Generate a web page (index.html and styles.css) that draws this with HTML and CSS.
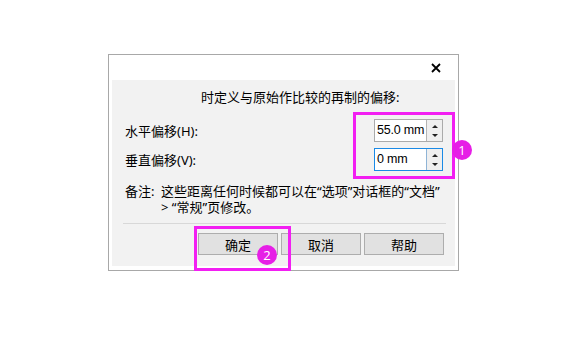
FILE: index.html
```html
<!DOCTYPE html>
<html lang="zh-CN">
  <head>
    <meta charset="UTF-8" />
    <title>偏移</title>
    <link rel="stylesheet" href="styles.css">
  </head>
  <body>
    <div class="dialog">
      <div class="titlebar">
        <svg class="close" width="10" height="10" viewBox="0 0 10 10">
          <path d="M1 1L9 9M9 1L1 9" stroke="#000" stroke-width="1.8" fill="none" />
        </svg>
      </div>
      <div class="panel">
        <div class="heading">时定义与原始作比较的再制的偏移:</div>

        <div class="row">
          <span class="label">水平偏移(H):</span>
          <div class="spin">
            <span class="spin__value">55.0 mm</span>
            <span class="spin__btns">
              <i class="arrow arrow--up"></i>
              <i class="arrow arrow--down"></i>
            </span>
          </div>
        </div>
        <div class="row">
          <span class="label">垂直偏移(V):</span>
          <div class="spin spin--focus">
            <span class="spin__value">0 mm</span>
            <span class="spin__btns">
              <i class="arrow arrow--up"></i>
              <i class="arrow arrow--down"></i>
            </span>
          </div>
        </div>

        <div class="note">
          <span class="note__label">备注:</span>
          <span class="note__text">这些距离任何时候都可以在“选项”对话框的“文档”<br>&gt; “常规”页修改。</span>
        </div>

        <div class="sep"></div>

        <div class="buttons">
          <button class="btn">确定</button>
          <button class="btn">取消</button>
          <button class="btn">帮助</button>
        </div>

        <!-- 标注 -->
        <div class="mark mark--1"></div>
        <div class="badge badge--1">1</div>
        <div class="mark mark--2"></div>
        <div class="badge badge--2">2</div>
      </div>
    </div>
  </body>
</html>
```

FILE: styles.css
```css
body {
  margin: 0;
  background: #fff;
  font-family: "Noto Sans", "Noto Sans CJK SC", sans-serif;
  font-size: 13px;
  color: #000;
}

.dialog {
  width: 349px;
  margin: 54px 0 0 108px;
  border: 1px solid #a8a8a8;
  background: #fff;
}

.titlebar {
  height: 25px;
  display: flex;
  justify-content: flex-end;
  align-items: center;
  padding-right: 17px;
}

.close {
  display: block;
}

.panel {
  position: relative;
  margin: 0 3px 4px 3px;
  padding: 8px 0 11px 0;
  background: #f2f2f2;
}

.heading {
  padding-left: 89px;
  line-height: 18px;
}

.row {
  display: flex;
  justify-content: space-between;
  align-items: center;
  padding: 0 12px 0 13px;
  height: 23px;
}

.heading + .row {
  margin-top: 13px;
}

.row + .row {
  margin-top: 6px;
}

.spin {
  display: flex;
  width: 67px;
  height: 21px;
  border: 1px solid #ababab;
  background: #fff;
}

.spin--focus {
  border-color: #1a8ae6;
}

.spin__value {
  flex: 1;
  padding-left: 2px;
  line-height: 21px;
  font-family: "Liberation Sans", Arial, sans-serif;
  font-size: 12.5px;
  letter-spacing: -0.2px;
  white-space: nowrap;
  overflow: hidden;
}

.spin__btns {
  width: 16px;
  border-left: 1px solid #b4b4b4;
  background: #efefef;
  display: flex;
  flex-direction: column;
  justify-content: space-between;
  align-items: center;
  padding: 5px 0 4px;
  box-sizing: border-box;
}

.spin--focus .spin__btns {
  border-left-color: #8fb4d6;
}

.arrow {
  width: 0;
  height: 0;
  border-left: 3px solid transparent;
  border-right: 3px solid transparent;
}

.arrow--up {
  border-bottom: 3px solid #222;
}

.arrow--down {
  border-top: 3px solid #222;
}

.note {
  display: flex;
  margin-top: 13px;
  padding-left: 13px;
  line-height: 15.5px;
  white-space: nowrap;
}

.note__label {
  width: 36px;
}

.sep {
  height: 1px;
  margin: 8px 9px 0 11px;
  background: #d8d8d8;
}

.buttons {
  display: flex;
  justify-content: flex-end;
  gap: 3px;
  margin-top: 9px;
  padding-right: 11px;
}

.btn {
  width: 80px;
  height: 22px;
  padding: 0;
  border: 1px solid #adadad;
  background: #e1e1e1;
  font-family: inherit;
  font-size: 13px;
  color: #000;
}

.mark {
  position: absolute;
  border: 3px solid #f21ff2;
}

.mark--1 {
  left: 241px;
  top: 32px;
  width: 96px;
  height: 61px;
}

.mark--2 {
  left: 82px;
  top: 146px;
  width: 91px;
  height: 39px;
}

.badge {
  position: absolute;
  width: 20px;
  height: 20px;
  border-radius: 50%;
  background: #e61fe6;
  color: #fff;
  font-family: "Open Sans", sans-serif;
  font-size: 13px;
  line-height: 20px;
  text-align: center;
}

.badge--1 {
  left: 340px;
  top: 60px;
}

.badge--2 {
  left: 145px;
  top: 165px;
}
```
